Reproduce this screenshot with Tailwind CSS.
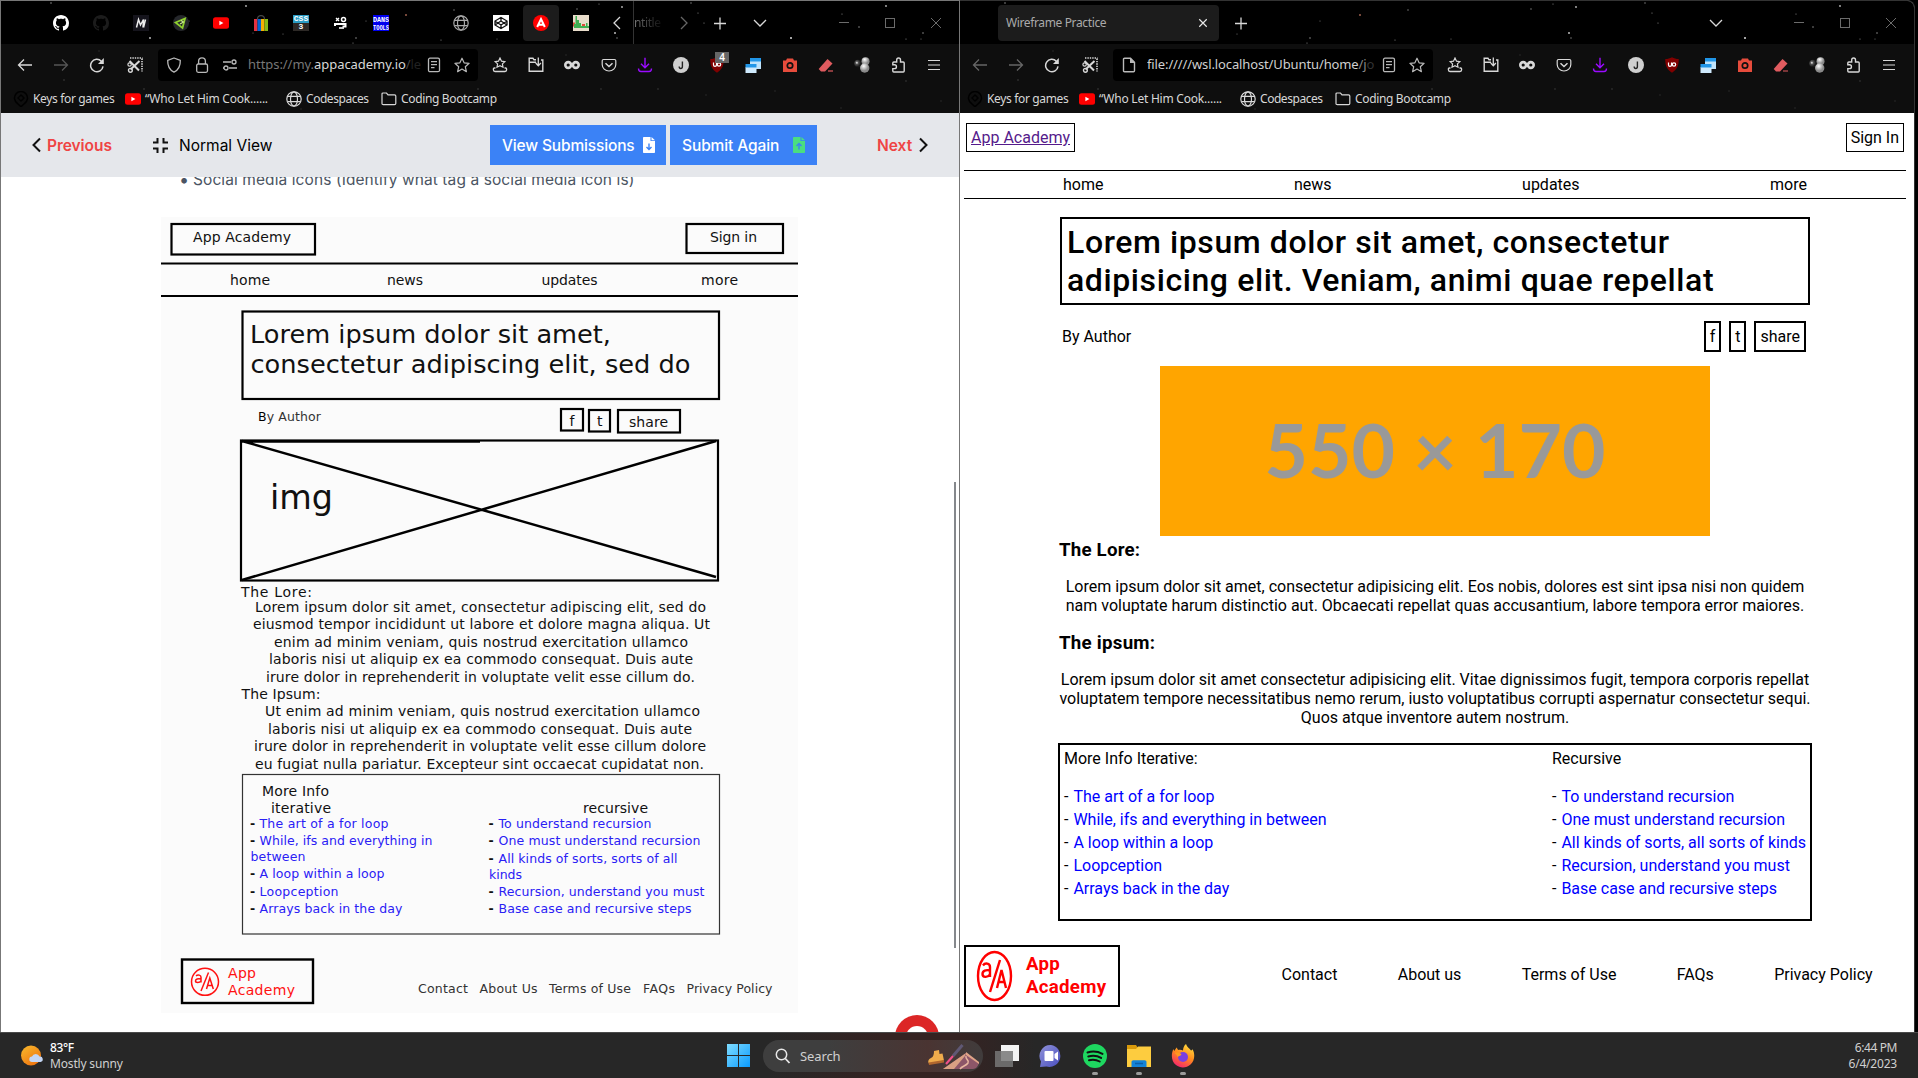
<!DOCTYPE html>
<html lang="en">
<head>
<meta charset="utf-8">
<title>Wireframe Practice</title>
<script src="https://cdn.jsdelivr.net/npm/@tailwindcss/browser@4"></script>
</head>
<body class="w-[1918px] h-[1078px] overflow-hidden bg-black flex flex-col font-['Noto_Sans',sans-serif]">

<!-- shared icons -->
<svg class="absolute w-0 h-0">
  <defs>
    <symbol id="i-back" viewBox="0 0 16 16"><path d="M15 8H1.5M7 2.5 1.5 8 7 13.5" fill="none" stroke="currentColor" stroke-width="1.3"/></symbol>
    <symbol id="i-fwd" viewBox="0 0 16 16"><path d="M1 8h13.5M9 2.500 14.500 8 9 13.500" fill="none" stroke="currentColor" stroke-width="1.300"/></symbol>
    <symbol id="i-reload" viewBox="0 0 16 16"><path d="M14 9.300A6.200 6.200 0 1 1 12.300 4.200" fill="none" stroke="currentColor" stroke-width="1.500"/><path d="M14.800 1v6H9z" fill="currentColor"/></symbol>
    <symbol id="i-cut" viewBox="0 0 16 16"><path d="M3 1h12.500M15 1.500v13" fill="none" stroke="currentColor" stroke-width="1.600" stroke-dasharray="1.400 1"/><path d="M2.500 4 12 13.500M12.500 4 3.500 12.500" stroke="currentColor" stroke-width="2" fill="none"/><circle cx="2.600" cy="7.500" r="1.700" fill="none" stroke="currentColor" stroke-width="1.200"/><circle cx="3.400" cy="13.300" r="1.900" fill="none" stroke="currentColor" stroke-width="1.400"/></symbol>
    <symbol id="i-shield" viewBox="0 0 16 16"><path d="M8 1 14.300 3.300C14.500 8.500 12.500 13 8 15.200 3.500 13 1.500 8.500 1.700 3.300z" fill="none" stroke="currentColor" stroke-width="1.300" stroke-linejoin="round"/></symbol>
    <symbol id="i-lock" viewBox="0 0 16 16"><rect x="2.700" y="7" width="10.800" height="8.300" rx="1.500" fill="none" stroke="currentColor" stroke-width="1.300"/><path d="M4.600 7V4.200a3.400 3.400 0 0 1 6.800 0V7" fill="none" stroke="currentColor" stroke-width="1.300"/></symbol>
    <symbol id="i-perm" viewBox="0 0 16 16"><path d="M1 5h8M7 11h8M1 11h1" stroke="currentColor" stroke-width="1.300"/><circle cx="12" cy="5" r="2" fill="none" stroke="currentColor" stroke-width="1.300"/><circle cx="4" cy="11" r="2" fill="none" stroke="currentColor" stroke-width="1.300"/></symbol>
    <symbol id="i-reader" viewBox="0 0 16 16"><rect x="2.500" y="1.200" width="11" height="13.500" rx="1.500" fill="none" stroke="currentColor" stroke-width="1.300"/><path d="M5 4.700h6M5 7.700h6M5 10.700h3.500" stroke="currentColor" stroke-width="1.200"/></symbol>
    <symbol id="i-star" viewBox="0 0 16 16"><path d="M8 1.200 10.100 5.800 15.100 6.300 11.300 9.700 12.400 14.700 8 12.100 3.600 14.700 4.700 9.700 .9 6.300 5.900 5.800z" fill="none" stroke="currentColor" stroke-width="1.200" stroke-linejoin="round"/></symbol>
    <symbol id="i-doc" viewBox="0 0 16 16"><path d="M2.500 2.200c0-.6.400-1 1-1h6L13.500 5.200v8.600c0 .6-.4 1-1 1h-9c-.6 0-1-.4-1-1z" fill="none" stroke="currentColor" stroke-width="1.400"/><path d="M9 1v5h5z" fill="currentColor"/></symbol>
    <symbol id="i-save" viewBox="0 0 16 16"><path d="M8 1 9.500 4.200 12.800 4.600 10.400 6.900 11 10.200 8 8.600 5 10.200 5.600 6.900 3.200 4.600 6.500 4.200z" fill="none" stroke="currentColor" stroke-width="1.200"/><path d="M3.500 11H2.300c-.6 0-.9.300-.9.900v.9c0 1 .6 1.700 1.600 1.700h10c1 0 1.600-.7 1.600-1.700v-.9c0-.6-.3-.9-.9-.9h-1.200" fill="none" stroke="currentColor" stroke-width="1.300"/></symbol>
    <symbol id="i-box" viewBox="0 0 16 16"><path d="M8 2.800H6L5 1.300H1.200v13h13.600V3H13M1 5.300h7" fill="none" stroke="currentColor" stroke-width="1.400"/><path d="M10.300.5v8M7.700 6l2.600 2.700L12.900 6" fill="none" stroke="currentColor" stroke-width="1.300"/></symbol>
    <symbol id="i-inf" viewBox="0 0 16 16"><circle cx="4.200" cy="8" r="2.900" fill="none" stroke="currentColor" stroke-width="2.600"/><circle cx="11.800" cy="8" r="2.900" fill="none" stroke="currentColor" stroke-width="2.600"/></symbol>
    <symbol id="i-pocket" viewBox="0 0 16 16"><path d="M2.500 2.500h11c.8 0 1.300.5 1.300 1.300V7.500a6.800 6.500 0 0 1-13.600 0V3.800c0-.8.500-1.300 1.300-1.300z" fill="none" stroke="currentColor" stroke-width="1.200"/><path d="M4.500 6.300 8 9.500l3.500-3.200" fill="none" stroke="currentColor" stroke-width="1.500"/></symbol>
    <symbol id="i-down" viewBox="0 0 16 16"><path d="M8 .7v9.800M4 6.700l4 4 4-4M1.500 11.500c0 2.200.8 3 2.500 3h8c1.700 0 2.500-.8 2.500-3" fill="none" stroke="#9a0bff" stroke-width="1.400"/></symbol>
    <symbol id="i-j" viewBox="0 0 16 16"><circle cx="8" cy="8" r="8" fill="#cfcfcf"/><path d="M6.200 9.500c0 1.500.6 2 1.500 2s1.700-.6 1.700-2V4.500" fill="none" stroke="#222" stroke-width="1.400"/></symbol>
    <symbol id="i-ub" viewBox="0 0 16 16"><path d="M8 .3c2 1.300 4.200 1.700 6.700 1.800C15 8.500 12.800 13 8 15.800 3.200 13 1 8.500 1.300 2.100 3.800 2 6 1.600 8 .3z" fill="#800000"/><path d="M4.500 5.500v2.600c0 1.800 3 1.800 3 0V5.500" fill="none" stroke="#fff" stroke-width="1.200"/><circle cx="10" cy="7.500" r="1.700" fill="none" stroke="#fff" stroke-width="1.200"/></symbol>
    <symbol id="i-win" viewBox="0 0 16 16"><path d="M5 4h11v8H5z" fill="#bfe3fb"/><path d="M5 1h11v3.500H5z" fill="#2196e8"/><path d="M.5 10h11v6H.5z" fill="#cfeafd"/><path d="M.5 7h11v3.500H.5z" fill="#2196e8"/></symbol>
    <symbol id="i-cam" viewBox="0 0 16 16"><path d="M1 3.500h3L5 1.500h6l1 2h3V15H1z" fill="#e74c3c"/><circle cx="8" cy="8.500" r="2.700" fill="none" stroke="#111" stroke-width="1.700"/></symbol>
    <symbol id="i-erase" viewBox="0 0 16 16"><path d="M9.500 2 14.500 6.500 7 14.500H3L.7 12z" fill="#e05b5f"/><path d="M10 14h5" stroke="#e05b5f" stroke-width="1.200"/></symbol>
    <radialGradient id="g-b1" cx=".35" cy=".4"><stop offset="0" stop-color="#fff"/><stop offset=".4" stop-color="#555"/><stop offset="1" stop-color="#1a1a1a"/></radialGradient>
    <radialGradient id="g-b2" cx=".4" cy=".3"><stop offset="0" stop-color="#fff"/><stop offset="1" stop-color="#8a8a8a"/></radialGradient>
    <symbol id="i-balls" viewBox="0 0 16 16"><circle cx="4" cy="6.500" r="3.800" fill="url(#g-b1)"/><circle cx="11.500" cy="4.200" r="4" fill="url(#g-b2)"/><circle cx="10.700" cy="11" r="4.700" fill="url(#g-b2)"/></symbol>
    <symbol id="i-puz" viewBox="0 0 16 16"><path d="M4.700 15H13.200c.6 0 1-.4 1-1V6c0-.6-.4-1-1-1H10.500V2.900a1.900 1.900 0 0 0-3.800 0V5H3.800c-.6 0-1 .4-1 1V7.700H4.500a1.900 1.900 0 0 1 0 3.900H2.800V14c0 .6.400 1 1 1z" fill="none" stroke="currentColor" stroke-width="1.400"/></symbol>
    <symbol id="i-menu" viewBox="0 0 16 16"><path d="M2 3.500h12M2 8h12M2 12.500h12" stroke="currentColor" stroke-width="1.200"/></symbol>
    <symbol id="i-key" viewBox="0 0 16 16"><path d="M8 15.800 4.500 12.500A6.500 6.500 0 1 1 11.500 12.500z" fill="none" stroke="#000" stroke-width="1.500"/><circle cx="8" cy="7" r="2.300" fill="none" stroke="#000" stroke-width="1.200"/><path d="M8 3v2M8 9v2M4 7h2M10 7h2" stroke="#000"/></symbol>
    <symbol id="i-yt" viewBox="0 0 16 16"><rect x="0" y="2.300" width="16" height="11.500" rx="2.500" fill="#f00"/><path d="M6.400 5.700v4.600L10.400 8z" fill="#fff"/></symbol>
    <symbol id="i-globe" viewBox="0 0 16 16"><g fill="none" stroke="currentColor" stroke-width="1.200"><circle cx="8" cy="8" r="7.200"/><ellipse cx="8" cy="8" rx="3.500" ry="7.200"/><path d="M1.500 5.300h13M1.500 10.700h13"/></g></symbol>
    <symbol id="i-folder" viewBox="0 0 16 16"><path d="M1 3c0-.6.400-1 1-1h3.500l1.500 1.800h6.500c.7 0 1.300.5 1.300 1.200v7.500c0 .7-.6 1.200-1.300 1.200H2.300C1.600 13.700 1 13.200 1 12.500z" fill="none" stroke="currentColor" stroke-width="1.200"/></symbol>
    <symbol id="i-gh" viewBox="0 0 16 16"><path fill="currentColor" d="M8 0C3.580 0 0 3.580 0 8c0 3.540 2.290 6.530 5.470 7.590.4.070.55-.17.55-.38 0-.19-.01-.82-.01-1.490-2.010.37-2.530-.49-2.690-.94-.09-.23-.48-.94-.82-1.130-.28-.15-.68-.52-.01-.53.63-.01 1.080.58 1.230.82.72 1.210 1.870.87 2.330.66.070-.52.280-.87.510-1.070-1.780-.2-3.640-.89-3.640-3.950 0-.87.310-1.590.82-2.150-.08-.2-.36-1.020.08-2.120 0 0 .67-.21 2.200.82.640-.18 1.320-.27 2-.27s1.360.09 2 .27c1.530-1.040 2.200-.82 2.200-.82.440 1.100.160 1.920.08 2.120.510.56.820 1.270.820 2.150 0 3.070-1.870 3.750-3.650 3.950.290.250.540.730.540 1.480 0 1.070-.01 1.930-.01 2.200 0 .21.150.46.550.38A8.010 8.010 0 0 0 16 8c0-4.420-3.580-8-8-8z"/></symbol>
    <symbol id="i-plus" viewBox="0 0 16 16"><path d="M8 2.500v12M2 8.500h12" stroke="currentColor" stroke-width="1.300"/></symbol>
    <symbol id="i-chev" viewBox="0 0 16 16"><path d="M2 5l6 6 6-6" fill="none" stroke="currentColor" stroke-width="1.300"/></symbol>
    <symbol id="i-min" viewBox="0 0 16 16"><path d="M3 7.500h10" stroke="currentColor"/></symbol>
    <symbol id="i-max" viewBox="0 0 16 16"><rect x="3.500" y="3.500" width="9" height="9" fill="none" stroke="currentColor"/></symbol>
    <symbol id="i-x" viewBox="0 0 16 16"><path d="M3 3l10 10M13 3 3 13" stroke="currentColor"/></symbol>
    <g id="stars" fill="#8a8a8a">
      <circle cx="50" cy="2" r=".8"/><circle cx="149" cy="37" r=".9" fill="#ccc"/><circle cx="188" cy="20" r=".5"/><circle cx="245" cy="5" r=".9" fill="#bbb"/><circle cx="252" cy="32" r=".5"/><circle cx="282" cy="33" r=".5"/><circle cx="355" cy="37" r=".8"/><circle cx="352" cy="42" r=".6"/><circle cx="405" cy="14" r="1" fill="#9c5f4d"/><circle cx="365" cy="20" r=".5"/><circle cx="440" cy="39" r=".6"/><circle cx="453" cy="9" r=".7"/><circle cx="496" cy="38" r=".5"/><circle cx="576" cy="8" r=".7"/><circle cx="598" cy="3" r=".6"/><circle cx="621" cy="6" r=".9" fill="#bbb"/><circle cx="614" cy="32" r="1" fill="#bbb"/><circle cx="616" cy="37" r=".7"/><circle cx="690" cy="2" r=".7"/><circle cx="697" cy="12" r=".6"/><circle cx="703" cy="22" r=".6"/><circle cx="790" cy="37" r="1" fill="#ddd"/><circle cx="841" cy="13" r=".6"/><circle cx="858" cy="26" r=".8"/><circle cx="885" cy="5" r=".9" fill="#bbb"/><circle cx="922" cy="32" r=".8"/><circle cx="905" cy="38" r=".6"/><circle cx="920" cy="38" r=".5"/>
      <g fill="#2c2c2c"><circle cx="63" cy="79" r="1"/><circle cx="143" cy="88" r="1"/><circle cx="98" cy="50" r=".8"/><circle cx="300" cy="108" r=".8"/><circle cx="477" cy="88" r="1"/><circle cx="565" cy="54" r=".8"/><circle cx="600" cy="88" r=".9"/><circle cx="657" cy="88" r=".9"/><circle cx="705" cy="94" r=".8"/><circle cx="774" cy="90" r=".8"/><circle cx="840" cy="107" r=".8"/><circle cx="905" cy="80" r=".9"/><circle cx="940" cy="100" r=".8"/></g>
    </g>
  </defs>
</svg>

<div class="flex h-[1032px]">

<!-- left browser window -->
<section class="relative w-[960px] h-full flex flex-col border-l border-r border-t border-[#777] bg-white overflow-hidden">
  <header class="relative h-[112px] shrink-0 bg-[#0e0e0e] text-[#d8d8d8]">
    <div class="absolute inset-0 bg-[linear-gradient(#000_43px,#0e0e0e_43px)]"><svg width="958" height="112"><use href="#stars"/></svg></div>
    <div class="relative h-[43px] flex items-center">
      <div class="w-10"></div>
      <div class="w-10 flex justify-center"><svg class="size-4 text-white"><use href="#i-gh"/></svg></div>
      <div class="w-10 flex justify-center"><svg class="size-4 text-[#1c1c1c]"><use href="#i-gh"/></svg></div>
      <div class="w-10 flex justify-center"><svg class="size-4" viewBox="0 0 16 16"><rect width="16" height="16" fill="#15141c"/><path d="M3.500 12.500 5.500 4.500 7.500 10 10.500 4.500 10 12.500M10.500 12.500 12.500 4.500" fill="none" stroke="#eee" stroke-width="1.500"/></svg></div>
      <div class="w-10 flex justify-center"><svg class="size-4" viewBox="0 0 16 16"><circle cx="8" cy="8" r="8" fill="#25272b"/><path d="M2.500 7.500 12 3.500 9.500 13z" fill="none" stroke="#8fd02f" stroke-width="1.800"/><path d="M8 5.500 10.500 7 7 9" fill="none" stroke="#c9e98c" stroke-width="1.200"/></svg></div>
      <div class="w-10 flex justify-center"><svg class="size-4"><use href="#i-yt"/></svg></div>
      <div class="w-10 flex justify-center"><svg class="size-4" viewBox="0 0 16 16"><path d="M4.500 4a3.500 3.500 0 0 1 7 0" fill="none" stroke="#444" stroke-width="1.300"/><path d="M1 4h3.500v12H1z" fill="#e5323f"/><path d="M4.500 4H8v12H4.500z" fill="#0064d3"/><path d="M8 4h3.500v12H8z" fill="#f5af02"/><path d="M11.500 4H15v12h-3.500z" fill="#86b817"/></svg></div>
      <div class="w-10 flex justify-center"><div class="size-4 flex flex-col text-white text-[8px] leading-[8px] text-center font-bold font-['Liberation_Mono',monospace]"><span class="bg-[#2a9cc4]">CSS</span><span class="bg-[#2d2926]">3</span></div></div>
      <div class="w-10 flex justify-center"><svg class="size-4" viewBox="0 0 16 16" fill="none" stroke="#fff"><path d="M3 3l3 3M6 3 3 6" stroke-width="1.300"/><circle cx="10.500" cy="4.500" r="2" stroke-width="1.500"/><path d="M2 11V9h10.500v2.500H9.500" stroke-width="2"/><path d="M6 13h5" stroke-width="1.600"/></svg></div>
      <div class="w-10 flex justify-center"><svg class="size-4" viewBox="0 0 16 16" font-family="'Liberation Mono',monospace" font-weight="700" font-size="7.500" fill="#fff"><rect width="16" height="16" fill="#0000ee"/><text x="0" y="7" textLength="16" lengthAdjust="spacingAndGlyphs">DANS</text><text x="0" y="14.500" textLength="16" lengthAdjust="spacingAndGlyphs">TOOLS</text></svg></div>
      <div class="w-10"></div>
      <div class="w-10 flex justify-center"><svg class="size-4 text-[#aaa]"><use href="#i-globe"/></svg></div>
      <div class="w-10 flex justify-center"><svg class="size-4" viewBox="0 0 16 16"><rect width="16" height="16" fill="#fff"/><path d="M8 2.500 14 6v4L8 13.500 2 10V6zM8 2.500V6l-3 2 3 2 3-2-3-2M8 13.500V10M2 6.200 5 8l-3 2M14 6.200 11 8l3 2" fill="none" stroke="#111" stroke-width="1.300"/></svg></div>
      <div class="w-10 flex justify-center"><div class="w-9 h-9 rounded bg-[#1c1c1c] flex items-center justify-center"><svg class="size-4" viewBox="0 0 16 16"><circle cx="8" cy="8" r="8" fill="#f00"/><path d="M4.200 12 8 4l3.800 8M5.500 9.800h5" fill="none" stroke="#fff" stroke-width="2"/></svg></div></div>
      <div class="w-10 flex justify-center"><svg class="size-4" viewBox="0 0 16 16"><rect width="16" height="16" fill="#e9ddcb"/><path d="M0 7.500h2v4H0zM9 9h3v4H9z" fill="#e04b3a"/><path d="M1 12V9h1.500V1H4v4h2v3h2v5H1zM8 11h5V8h1.500v3H16v2H8z" fill="#3fae52"/></svg></div>
      <div class="w-8 flex justify-center"><svg class="size-4 rotate-90"><use href="#i-chev"/></svg></div>
      <div class="h-[43px] w-[39px] border-l border-[#333] flex items-center overflow-hidden text-[12px] tracking-[-0.4px]"><span class="text-transparent bg-clip-text bg-linear-to-r from-[#777] to-[#111]">ntitle</span></div>
      <div class="w-6 flex justify-center"><svg class="size-4 -rotate-90 text-[#666]"><use href="#i-chev"/></svg></div>
      <div class="w-12 flex justify-center"><svg class="size-4"><use href="#i-plus"/></svg></div>
      <div class="w-8 flex justify-center"><svg class="size-4"><use href="#i-chev"/></svg></div>
      <div class="ml-auto flex text-[#6b6b6b]">
        <div class="w-[46px] flex justify-center"><svg class="size-4"><use href="#i-min"/></svg></div>
        <div class="w-[46px] flex justify-center"><svg class="size-4"><use href="#i-max"/></svg></div>
        <div class="w-[46px] flex justify-center"><svg class="size-4"><use href="#i-x"/></svg></div>
      </div>
    </div>
    <div class="relative h-10 flex items-center pl-1.5 pt-px">
      <div class="w-9 flex justify-center"><svg class="size-4"><use href="#i-back"/></svg></div>
      <div class="w-9 flex justify-center"><svg class="size-4 text-[#555]"><use href="#i-fwd"/></svg></div>
      <div class="w-9 flex justify-center"><svg class="size-4"><use href="#i-reload"/></svg></div>
      <div class="w-10 flex justify-center"><svg class="size-4"><use href="#i-cut"/></svg></div>
      <div class="ml-[3px] w-80 h-8 rounded bg-black flex items-center pl-2 text-[#b9b9b9]">
        <svg class="size-4"><use href="#i-shield"/></svg>
        <svg class="size-4 ml-3"><use href="#i-lock"/></svg>
        <svg class="size-4 ml-3"><use href="#i-perm"/></svg>
        <span class="ml-2.5 w-[173px] overflow-hidden whitespace-nowrap text-[13px] tracking-[-0.05px] text-[#777]">https://my.<span class="text-[#d8d8d8]">appacademy.io</span><span class="text-[#444]">/</span><span class="text-[#222]">le</span></span>
        <svg class="size-4 ml-[5px]"><use href="#i-reader"/></svg>
        <svg class="size-4 ml-3"><use href="#i-star"/></svg>
      </div>
      <div class="ml-1 flex items-center [&>div]:w-[36.200px] [&>div]:flex [&>div]:justify-center">
        <div><svg class="size-4"><use href="#i-save"/></svg></div>
        <div><svg class="size-4"><use href="#i-box"/></svg></div>
        <div><svg class="size-4"><use href="#i-inf"/></svg></div>
        <div><svg class="size-4"><use href="#i-pocket"/></svg></div>
        <div><svg class="size-4"><use href="#i-down"/></svg></div>
        <div><svg class="size-4"><use href="#i-j"/></svg></div>
        <div class="relative"><svg class="size-4"><use href="#i-ub"/></svg><span class="absolute left-4 -top-[5px] w-[14px] h-[11px] bg-[#666] text-white text-[10px] leading-[11px] text-center font-semibold">4</span></div>
        <div><svg class="size-4"><use href="#i-win"/></svg></div>
        <div><svg class="size-4"><use href="#i-cam"/></svg></div>
        <div><svg class="size-4"><use href="#i-erase"/></svg></div>
        <div><svg class="size-4"><use href="#i-balls"/></svg></div>
        <div><svg class="size-4"><use href="#i-puz"/></svg></div>
        <div><svg class="size-4"><use href="#i-menu"/></svg></div>
      </div>
    </div>
    <div class="relative h-[29px] pt-px flex items-center pl-3 text-[12px] tracking-[-0.35px] whitespace-nowrap">
      <div class="w-[112px] flex items-center gap-1"><svg class="size-4"><use href="#i-key"/></svg>Keys for games</div>
      <div class="w-[161px] flex items-center gap-1 tracking-[-0.23px]"><svg class="size-4"><use href="#i-yt"/></svg>“Who Let Him Cook......</div>
      <div class="w-[95px] flex items-center gap-1 tracking-[-0.45px]"><svg class="size-4"><use href="#i-globe"/></svg>Codespaces</div>
      <div class="flex items-center gap-1"><svg class="size-4"><use href="#i-folder"/></svg>Coding Bootcamp</div>
    </div>
  </header>

  <nav class="h-16 shrink-0 bg-[#e5e7eb] flex items-center text-[15.5px] font-['Inter',sans-serif] text-black [&_span]:pt-[2px]">
    <svg class="ml-[30px] w-[11px] h-4" viewBox="0 0 11 16"><path d="M9 1.500 2.500 8 9 14.500" fill="none" stroke="#111" stroke-width="2"/></svg>
    <span class="w-[106px] ml-[5px] text-[#ef4444] font-semibold tracking-[-0.05px]">Previous</span>
    <svg class="w-[15px] h-[15px]" viewBox="0 0 15 15"><path d="M0 4.500h4.500V0M15 4.500h-4.500V0M0 10.500h4.500V15M15 10.500h-4.500V15" fill="none" stroke="#111" stroke-width="2"/></svg>
    <span class="ml-[11px] w-[311px]">Normal View</span>
    <button class="w-[176px] h-10 bg-[#3b82f6] text-white font-medium flex items-center pl-3 whitespace-nowrap"><span class="w-[141px] text-left tracking-[-0.15px]">View Submissions</span><svg class="w-[12px] h-4" viewBox="0 0 12 16"><path d="M1 0h6.500v4H12v11c0 .6-.4 1-1 1H1c-.6 0-1-.4-1-1V1c0-.6.400-1 1-1zM8.500 0 12 3.200H8.500z" fill="#fff"/><path d="M6 6.500v6M3.500 10 6 12.500 8.500 10" stroke="#3b82f6" stroke-width="1.400" fill="none"/></svg></button>
    <button class="ml-1 w-[147px] h-10 bg-[#3b82f6] text-white font-medium flex items-center pl-3 whitespace-nowrap"><span class="w-[111px] text-left tracking-[-0.1px]">Submit Again</span><svg class="w-[12px] h-4" viewBox="0 0 12 16"><path d="M1 0h6.500v4H12v11c0 .6-.4 1-1 1H1c-.6 0-1-.4-1-1V1c0-.6.400-1 1-1zM8.500 0 12 3.200H8.500z" fill="#4ade80"/><path d="M6 12.500v-6M3.500 9 6 6.500 8.500 9" stroke="#3b82f6" stroke-width="1.400" fill="none"/></svg></button>
    <span class="ml-[60px] w-[41px] text-[#ef4444] font-semibold">Next</span>
    <svg class="w-[11px] h-4" viewBox="0 0 11 16"><path d="M2 1.500 8.500 8 2 14.500" fill="none" stroke="#111" stroke-width="2"/></svg>
  </nav>

  <main class="relative flex-1 overflow-hidden">
    <div class="-mt-[9px] h-[49px] pl-[178px] flex text-[#4b5563] text-[15.500px] leading-6 font-['Inter',sans-serif]"><span class="w-[14px] text-[18px]">•</span><span class="whitespace-nowrap tracking-[0.09px]">Social media icons (Identify what tag a social media icon is)</span></div>
    <svg class="block ml-40" width="637" height="796" viewBox="161 217 637 796" font-family="'DejaVu Sans',sans-serif" fill="#111">
      <rect x="161" y="217" width="637" height="796" fill="#fbfbfb"/>
      <g fill="none" stroke="#000" stroke-width="2.200">
        <rect x="171.500" y="224" width="143.500" height="30.500"/>
        <rect x="686.500" y="224" width="96.500" height="29"/>
        <path d="M161 263.500h637M161 296h637"/>
        <rect x="242.500" y="311.500" width="476.500" height="87.500"/>
        <rect x="561" y="409" width="22" height="21.500"/>
        <rect x="589" y="410" width="21" height="21.500"/>
        <rect x="618" y="410" width="62" height="22.500"/>
        <rect x="241" y="440.500" width="477" height="140"/>
        <path d="M241 441.500h239M242 441 716 577M242 580 716 441" stroke-width="2.500"/>
        <rect x="182" y="959.500" width="131" height="43.500" stroke-width="2.400"/>
      </g>
      <rect x="242.500" y="774.500" width="477" height="159.500" fill="none" stroke="#333" stroke-width="1.200"/>
      <g font-size="14">
        <text x="193" y="242" textLength="98">App Academy</text>
        <text x="710" y="241.500" textLength="47">Sign in</text>
        <text x="230" y="284.500" textLength="40">home</text>
        <text x="387" y="285" textLength="36">news</text>
        <text x="541.500" y="284.500" textLength="56">updates</text>
        <text x="701" y="285" textLength="37">more</text>
        <text x="569.500" y="426">f</text>
        <text x="597" y="426">t</text>
        <text x="629" y="427" textLength="39">share</text>
      </g>
      <text x="258" y="420.500" font-size="12.500" textLength="63" fill="#333"><tspan fill="#000">B</tspan>y Author</text>
      <g font-size="25.500">
        <text x="250" y="342.500" textLength="361" lengthAdjust="spacingAndGlyphs">Lorem ipsum dolor sit amet,</text>
        <text x="250.500" y="373" textLength="440" lengthAdjust="spacingAndGlyphs">consectetur adipiscing elit, sed do</text>
      </g>
      <text x="270" y="508.500" font-size="34" textLength="63" lengthAdjust="spacingAndGlyphs">img</text>
      <g font-size="14">
        <text x="241" y="597" textLength="71">The Lore:</text>
        <text x="255" y="611.500" textLength="451">Lorem ipsum dolor sit amet, consectetur adipiscing elit, sed do</text>
        <text x="253" y="629" textLength="457">eiusmod tempor incididunt ut labore et dolore magna aliqua. Ut</text>
        <text x="274" y="646.500" textLength="414">enim ad minim veniam, quis nostrud exercitation ullamco</text>
        <text x="269" y="664" textLength="424">laboris nisi ut aliquip ex ea commodo consequat. Duis aute</text>
        <text x="266" y="681.500" textLength="429">irure dolor in reprehenderit in voluptate velit esse cillum do.</text>
        <text x="241.500" y="699" textLength="79">The Ipsum:</text>
        <text x="265" y="716" textLength="435">Ut enim ad minim veniam, quis nostrud exercitation ullamco</text>
        <text x="268" y="733.500" textLength="424">laboris nisi ut aliquip ex ea commodo consequat. Duis aute</text>
        <text x="254" y="751" textLength="452">irure dolor in reprehenderit in voluptate velit esse cillum dolore</text>
        <text x="255" y="768.500" textLength="449">eu fugiat nulla pariatur. Excepteur sint occaecat cupidatat non.</text>
        <text x="262" y="795.500" textLength="67">More Info</text>
        <text x="271" y="812.500" textLength="60">iterative</text>
        <text x="583" y="812.500" textLength="65">recursive</text>
      </g>
      <g font-size="12.500">
        <g font-weight="700"><text x="250" y="827.500">-</text><text x="250" y="845">-</text><text x="250" y="878">-</text><text x="250" y="895.500">-</text><text x="250" y="913">-</text>
        <text x="488.500" y="827.500">-</text><text x="488.500" y="845">-</text><text x="488.500" y="862.500">-</text><text x="488.500" y="895.500">-</text><text x="488.500" y="913">-</text></g>
        <g fill="#2a20f5">
          <text x="259.500" y="827.500" textLength="129">The art of a for loop</text>
          <text x="259.500" y="845" textLength="173">While, ifs and everything in</text>
          <text x="250.500" y="861" textLength="55">between</text>
          <text x="259.500" y="878" textLength="125">A loop within a loop</text>
          <text x="259.500" y="895.500" textLength="79">Loopception</text>
          <text x="259.500" y="913" textLength="143">Arrays back in the day</text>
          <text x="498.500" y="827.500" textLength="153">To understand recursion</text>
          <text x="498.500" y="845" textLength="202">One must understand recursion</text>
          <text x="498.500" y="862.500" textLength="179">All kinds of sorts, sorts of all</text>
          <text x="489" y="878.500" textLength="33">kinds</text>
          <text x="498.500" y="895.500" textLength="206">Recursion, understand you must</text>
          <text x="498.500" y="913" textLength="193">Base case and recursive steps</text>
        </g>
        <g fill="#333">
          <text x="418" y="992.500" textLength="50">Contact</text>
          <text x="479.500" y="992.500" textLength="58">About Us</text>
          <text x="549" y="992.500" textLength="82">Terms of Use</text>
          <text x="643" y="992.500" textLength="32">FAQs</text>
          <text x="686.500" y="992.500" textLength="86">Privacy Policy</text>
        </g>
      </g>
      <g font-size="14" fill="#f11">
        <text x="228" y="978" textLength="28">App</text>
        <text x="228" y="995" textLength="67">Academy</text>
      </g>
      <g fill="none" stroke="#f11" stroke-width="1.500">
        <circle cx="205" cy="981.800" r="13.500"/>
        <path d="M208.500 972.500 201 991"/>
        <path d="M196 975.800c2-1.500 5-.8 5 1.400v5.300M201 979c-3-.7-5.500 0-5.500 2s4 2 5.500 0M206.500 989l3.300-11 3.500 11M207.500 985.500h5"/>
      </g>
    </svg>
    <div class="absolute left-[953px] top-[305px] w-[2px] h-[466px] bg-[#85888c]"></div>
    <div class="absolute left-[894px] top-[838px] size-[44px] rounded-full bg-[#dc2626] flex items-center justify-center"><div class="size-[22px] rounded-full bg-white"></div></div>
  </main>
</section>

<!-- right browser window -->
<section class="w-[955px] h-full flex flex-col border-t border-r border-[#333] bg-white overflow-hidden rounded-tr-lg">
  <header class="relative h-[112px] shrink-0 bg-[#0e0e0e] text-[#d8d8d8]">
    <div class="absolute inset-0 bg-[linear-gradient(#000_43px,#0e0e0e_43px)]"><svg width="954" height="112" viewBox="5 0 954 112"><use href="#stars"/></svg></div>
    <div class="relative h-[43px] flex items-center pl-[38px]">
      <div class="w-[221px] h-9 rounded bg-[#1c1c1c] flex items-center justify-between pl-2 pr-2 text-[12px] tracking-[-0.37px] text-[#aaa]">Wireframe Practice<svg class="size-4 p-[2px]" viewBox="0 0 16 16"><path d="M3 3l10 10M13 3 3 13" stroke="#e8e8e8" stroke-width="1.600"/></svg></div>
      <div class="w-[44px] flex justify-center"><svg class="size-4"><use href="#i-plus"/></svg></div>
      <div class="ml-auto w-9 mr-[42px] flex justify-center"><svg class="size-4"><use href="#i-chev"/></svg></div>
      <div class="flex text-[#6b6b6b]">
        <div class="w-[46px] flex justify-center"><svg class="size-4"><use href="#i-min"/></svg></div>
        <div class="w-[46px] flex justify-center"><svg class="size-4"><use href="#i-max"/></svg></div>
        <div class="w-[46px] flex justify-center"><svg class="size-4"><use href="#i-x"/></svg></div>
      </div>
    </div>
    <div class="relative h-10 flex items-center pl-0.5 pt-px">
      <div class="w-9 flex justify-center"><svg class="size-4 text-[#666]"><use href="#i-back"/></svg></div>
      <div class="w-9 flex justify-center"><svg class="size-4 text-[#666]"><use href="#i-fwd"/></svg></div>
      <div class="w-9 flex justify-center"><svg class="size-4"><use href="#i-reload"/></svg></div>
      <div class="w-10 flex justify-center"><svg class="size-4"><use href="#i-cut"/></svg></div>
      <div class="ml-[3px] w-80 h-8 rounded bg-black flex items-center pl-2 text-[#b9b9b9]">
        <svg class="size-4"><use href="#i-doc"/></svg>
        <span class="ml-2.5 w-[229px] overflow-hidden whitespace-nowrap text-[13px] tracking-[-0.12px] text-[#cfcfcf]">file://///wsl.localhost/Ubuntu/home<span class="text-[#888]">/j</span><span class="text-[#333]">o</span></span>
        <svg class="size-4 ml-[5px]"><use href="#i-reader"/></svg>
        <svg class="size-4 ml-3"><use href="#i-star"/></svg>
      </div>
      <div class="ml-1 flex items-center [&>div]:w-[36.200px] [&>div]:flex [&>div]:justify-center">
        <div><svg class="size-4"><use href="#i-save"/></svg></div>
        <div><svg class="size-4"><use href="#i-box"/></svg></div>
        <div><svg class="size-4"><use href="#i-inf"/></svg></div>
        <div><svg class="size-4"><use href="#i-pocket"/></svg></div>
        <div><svg class="size-4"><use href="#i-down"/></svg></div>
        <div><svg class="size-4"><use href="#i-j"/></svg></div>
        <div><svg class="size-4"><use href="#i-ub"/></svg></div>
        <div><svg class="size-4"><use href="#i-win"/></svg></div>
        <div><svg class="size-4"><use href="#i-cam"/></svg></div>
        <div><svg class="size-4"><use href="#i-erase"/></svg></div>
        <div><svg class="size-4"><use href="#i-balls"/></svg></div>
        <div><svg class="size-4"><use href="#i-puz"/></svg></div>
        <div><svg class="size-4"><use href="#i-menu"/></svg></div>
      </div>
    </div>
    <div class="relative h-[29px] pt-px flex items-center pl-[7px] text-[12px] tracking-[-0.35px] whitespace-nowrap">
      <div class="w-[112px] flex items-center gap-1"><svg class="size-4"><use href="#i-key"/></svg>Keys for games</div>
      <div class="w-[161px] flex items-center gap-1 tracking-[-0.23px]"><svg class="size-4"><use href="#i-yt"/></svg>“Who Let Him Cook......</div>
      <div class="w-[95px] flex items-center gap-1 tracking-[-0.45px]"><svg class="size-4"><use href="#i-globe"/></svg>Codespaces</div>
      <div class="flex items-center gap-1"><svg class="size-4"><use href="#i-folder"/></svg>Coding Bootcamp</div>
    </div>
  </header>

  <main class="flex-1 pl-1 pr-2 text-black text-[16px] leading-[19px] font-['Roboto',sans-serif]">
    <div class="pt-[10px] flex justify-between pl-[2px] pr-[2px]">
      <a class="border border-black p-1 underline text-[#551a8b]">App Academy</a>
      <a class="border border-black p-1">Sign In</a>
    </div>
    <ul class="mt-[18px] border-y border-black h-[29px] px-[99px] flex items-center justify-between"><li>home</li><li>news</li><li>updates</li><li>more</li></ul>
    <article class="mt-[18px] mx-24">
      <h1 class="border-2 border-black p-1 pl-[5px] text-[32px] leading-[38px] font-medium h-[88px] tracking-[0.6px] whitespace-nowrap">Lorem ipsum dolor sit amet, consectetur<br>adipisicing elit. Veniam, animi quae repellat</h1>
      <div class="mt-4 flex items-center pl-[2px] pr-1"><span class="mr-auto">By Author</span>
        <div class="flex gap-2"><span class="border-2 border-black p-1">f</span><span class="border-2 border-black p-1">t</span><span class="border-2 border-black p-1">share</span></div></div>
      <div class="mt-[14px] mx-auto w-[550px] h-[170px] pb-1 bg-[#ffa500] text-[#999] font-['Lato',sans-serif] font-bold text-[75px] flex items-center justify-center whitespace-nowrap">550 × 170</div>
      <h3 class="mt-[3px] -ml-px text-[18.720px] leading-[22px] font-bold tracking-[0.2px]">The Lore:</h3>
      <p class="mt-4 text-center">Lorem ipsum dolor sit amet, consectetur adipisicing elit. Eos nobis, dolores est sint ipsa nisi non quidem<br>nam voluptate harum distinctio aut. Obcaecati repellat quas accusantium, labore tempora error maiores.</p>
      <h3 class="mt-[17px] -ml-px text-[18.720px] leading-[22px] font-bold tracking-[0.25px]">The ipsum:</h3>
      <p class="mt-4 -mx-2 text-center whitespace-nowrap">Lorem ipsum dolor sit amet consectetur adipisicing elit. Vitae dignissimos fugit, tempora corporis repellat<br>voluptatem tempore necessitatibus nemo rerum, iusto voluptatibus corrupti aspernatur consectetur sequi.<br>Quos atque inventore autem nostrum.</p>
      <div class="mt-4 -mx-[2px] h-[178px] border-2 border-black p-1 flex justify-between text-[#0000ff] [&_b]:font-normal [&_b]:text-black [&_b]:tracking-[0.5px]">
        <div class="leading-[23px]"><div class="text-black leading-[19px] mb-[17px]">More Info Iterative:</div><div><b>- </b>The art of a for loop</div><div><b>- </b>While, ifs and everything in between</div><div><b>- </b>A loop within a loop</div><div><b>- </b>Loopception</div><div><b>- </b>Arrays back in the day</div></div>
        <div class="leading-[23px]"><div class="text-black leading-[19px] mb-[17px]">Recursive</div><div><b>- </b>To understand recursion</div><div><b>- </b>One must understand recursion</div><div><b>- </b>All kinds of sorts, all sorts of kinds</div><div><b>- </b>Recursion, understand you must</div><div><b>- </b>Base case and recursive steps</div></div>
      </div>
    </article>
    <footer class="mt-6 flex items-center">
      <div class="w-[156px] h-[62px] border-2 border-black flex items-center pl-2.5 text-[#f00] text-[18.720px] leading-[23px] font-bold tracking-[0.25px]">
        <svg class="mr-[13px]" width="37" height="52" viewBox="0 0 37 52" fill="none" stroke="#f00" stroke-width="2.400"><ellipse cx="18.500" cy="26" rx="16.500" ry="24"/><path d="M24 10 14 42"/><path d="M7 15.500c2-3 7-2.500 7 1.500v10M14 20.500c-4-1-7.500 0-7.500 3.500s5 4 7.500.5M21 38l4.500-18L30 38M22.500 32h6.500"/></svg>
        <span>App<br>Academy</span>
      </div>
      <div class="ml-[161.500px] flex gap-[60.300px] pb-[3px] whitespace-nowrap"><a>Contact</a><a>About us</a><a>Terms of Use</a><a>FAQs</a><a>Privacy Policy</a></div>
    </footer>
  </main>
</section>
</div>

<!-- taskbar -->
<footer class="h-[46px] border-t border-[#4a4a4a] bg-[#272727] bg-[linear-gradient(90deg,#272727_40%,#352322_46%,#352322_50%,#272727_54%)] flex items-center text-[12px] leading-4 text-[#d0d0d0]">
  <svg class="ml-5 w-6 h-6" viewBox="0 0 24 24"><defs><linearGradient id="sun" x2=".7" y2="1"><stop stop-color="#f9bb2d"/><stop offset="1" stop-color="#ee7410"/></linearGradient></defs><circle cx="11" cy="11.500" r="10" fill="url(#sun)"/><path d="M12 18a2.700 2.700 0 0 1 0-5.400 4 4 0 0 1 7.500 0A2.700 2.700 0 0 1 20.500 18z" fill="#c4d6f5"/></svg>
  <div class="ml-[6px] w-[670px] tracking-[-0.17px]"><div class="text-white tracking-[-0.4px] font-medium">83°F</div><div>Mostly sunny</div></div>
  <svg class="ml-[7px] w-[23px] h-[23px]" viewBox="0 0 23 23"><defs><linearGradient id="wl" x2="1" y2="1"><stop stop-color="#7fdcff"/><stop offset="1" stop-color="#0a9bff"/></linearGradient></defs><path d="M0 0h11v11H0zM12 0h11v11H12zM0 12h11v11H0zM12 12h11v11H12z" fill="url(#wl)"/></svg>
  <div class="ml-[13px] w-[220px] h-8 rounded-full bg-[linear-gradient(90deg,#3e3e3e_30%,#4a3432_75%,#403c3c)] flex items-center pl-3 text-[13px]">
    <svg class="size-4" viewBox="0 0 16 16"><circle cx="6.500" cy="6.500" r="5.200" fill="none" stroke="#e8e8e8" stroke-width="1.500"/><path d="M10.300 10.500 14.500 15" stroke="#e8e8e8" stroke-width="1.800"/></svg>
    <span class="ml-[9px] w-[127px] tracking-[-0.1px]">Search</span>
    <svg class="w-[54px] h-7" viewBox="0 0 54 28"><path d="M7 9l5-1 .5 4 3-.5 1.500 7L2 21.500C.5 20 1.500 17 4 16c2.500-1 3-4 3-7z" fill="#efac4c"/><path d="M1.500 20.500 17 18v2.500L2 23z" fill="#b0662e"/><path d="M35.500 3 26 14" stroke="#5f5874" stroke-width="3"/><path d="M26 14l-7 8" stroke="#f0508a" stroke-width="2"/><path d="M16 27 39 11 52 21c-1 3-3 6-6 6z" fill="#8d5668"/><path d="M16 27 39 11 38 14 27 27z" fill="#d9a083"/><path d="M39 10 52 20v2L39 13z" fill="#e0a488"/><path d="M39 14c-1 4 4 4 2 7s-6 3-8 6" stroke="#e9b7a0" stroke-width="1.500" fill="none"/></svg>
  </div>
  <div class="ml-[2px] flex [&>div]:relative [&>div]:w-11 [&>div]:h-[45px] [&>div]:flex [&>div]:items-center [&>div]:justify-center [&_i]:absolute [&_i]:bottom-[3px] [&_i]:w-[6px] [&_i]:h-[3px] [&_i]:rounded-full [&_i]:bg-[#9b9b9b]">
    <div><svg class="size-6" viewBox="0 0 24 24"><path d="M6 1h18v16H6z" fill="#f3f3f3"/><path d="M0 7h18v16H0z" fill="#777" opacity=".85"/></svg></div>
    <div><svg class="size-6" viewBox="0 0 24 24"><defs><linearGradient id="ch" x2="1" y2="1"><stop stop-color="#8f92d8"/><stop offset="1" stop-color="#4a4fc0"/></linearGradient></defs><path d="M12 1a11 11 0 1 1-4.500 21.500L1 23l1-5.500A11 11 0 0 1 12 1z" fill="url(#ch)"/><rect x="5.500" y="7" width="9" height="10" rx="1" fill="#fff"/><path d="M15.500 10 19 7.500v9L15.500 14z" fill="#fff"/></svg></div>
    <div><svg class="size-6" viewBox="0 0 24 24"><circle cx="12" cy="12" r="12" fill="#1ed760"/><path d="M4.500 8.500c5-1.500 10.500-1 15 1.400M5.300 12.500c4.500-1.200 9-.8 12.800 1.400M6 16.200c3.700-.9 7.500-.5 10.700 1.300" fill="none" stroke="#111" stroke-width="2" stroke-linecap="round"/></svg><i></i></div>
    <div><svg class="size-6" viewBox="0 0 24 24"><path d="M0 1h9l2 3v3H0z" fill="#d99a0b"/><path d="M0 5h9l2-2.500h13V23H0z" fill="#fdcc3f"/><path d="M4.500 23v-5c0-1 .8-1.800 1.800-1.800h11.400c1 0 1.800.8 1.800 1.800v5z" fill="#1383d8"/><path d="M8 19.500h8" stroke="#0b5fa8" stroke-width="1.500"/></svg><i></i></div>
    <div><svg class="size-6" viewBox="0 0 24 24"><defs><linearGradient id="ff" x1=".8" x2=".3" y2="1"><stop stop-color="#ffe33f"/><stop offset=".5" stop-color="#ff8a1d"/><stop offset="1" stop-color="#f5256e"/></linearGradient></defs><path d="M15 0c1 3 3 4 5 6.500 1 0 1.500-1 1.500-1.500 3 5.500 2 12-2 15.500-4 3.500-10 4-14.500.5C0 17 0 10 2.500 5c.3 1 .5 1.500 1 2 .5-1.500 1.500-3 2.500-3.500 0 1 .5 2 1.500 2.500 2-.5 3 0 4.500.5C12 4 13 1.500 15 0z" fill="url(#ff)"/><circle cx="12" cy="13" r="5" fill="#7a3fe0"/><path d="M3.500 9c3-1 5 0 7 1-1 2.500-3 2-4 3-.5-2-1.500-3-3-4z" fill="#ff9a1f"/></svg><i></i></div>
  </div>
  <div class="ml-auto mr-[21px] text-right tracking-[-0.2px]"><div class="tracking-[-0.4px]">6:44 PM</div><div>6/4/2023</div></div>
</footer>
</body>
</html>
